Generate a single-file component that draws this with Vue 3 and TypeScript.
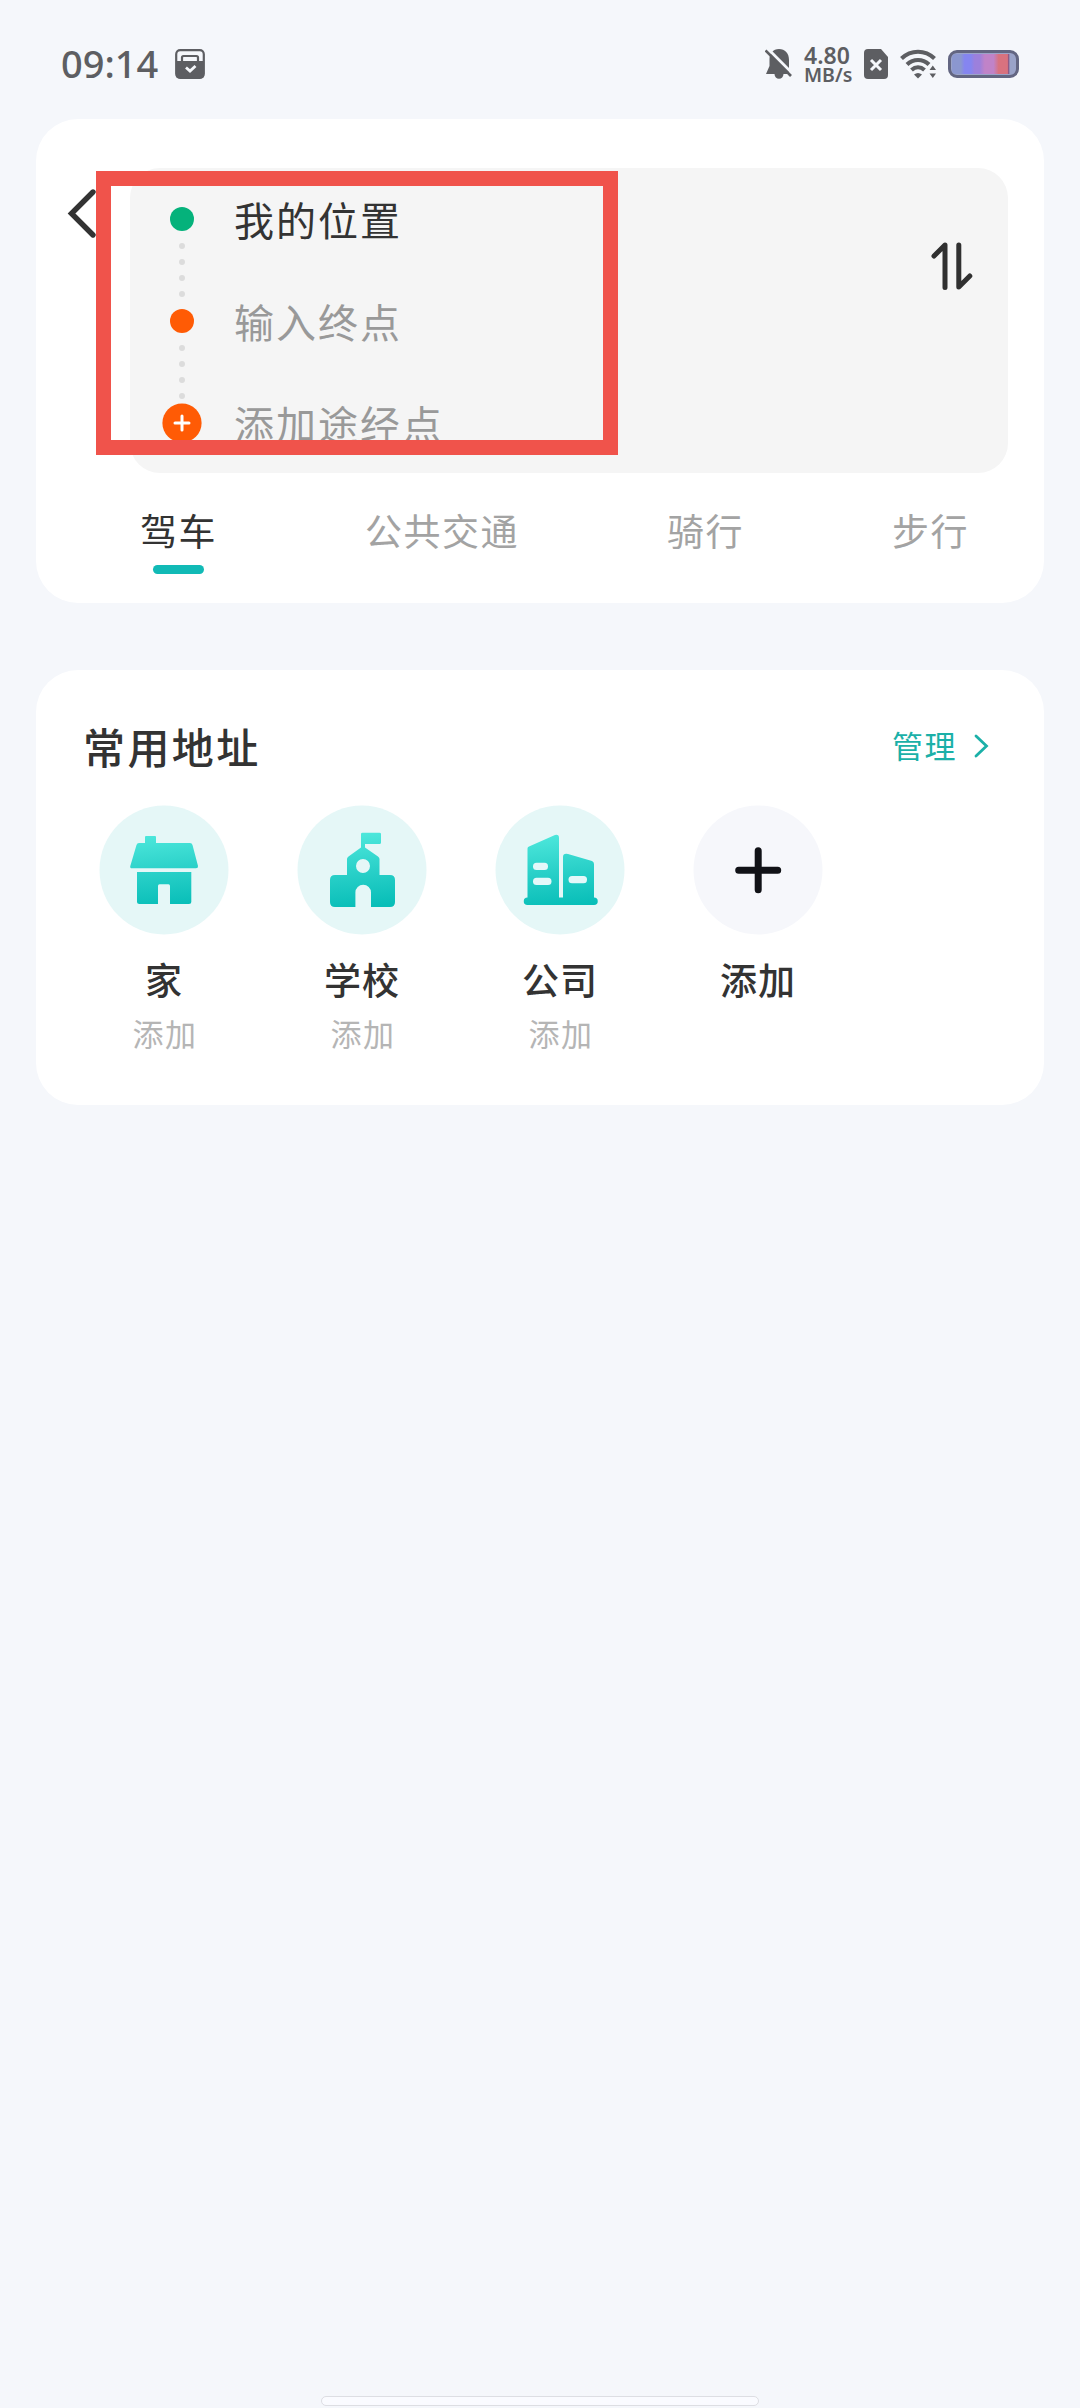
<script setup lang="ts">
import { ref } from 'vue'

type IconName = 'home' | 'school' | 'company' | 'plus'

interface Place {
  icon: IconName
  name: string
  hint?: string
}

const tabs: string[] = ['驾车', '公共交通', '骑行', '步行']
const activeTab = ref(0)

const places: Place[] = [
  { icon: 'home', name: '家', hint: '添加' },
  { icon: 'school', name: '学校', hint: '添加' },
  { icon: 'company', name: '公司', hint: '添加' },
  { icon: 'plus', name: '添加' },
]
</script>

<template>
  <div class="screen">
    <header class="status">
      <span class="time">09:14</span>
      <svg class="inbox" width="30" height="30" viewBox="0 0 30 30">
        <rect x="1.2" y="1.2" width="27.6" height="27.6" rx="4" fill="none" stroke="#5d5e62" stroke-width="2.2" />
        <path d="M1 12H29V26a3.500 3.500 0 0 1-3.500 3.500H4.500A3.500 3.500 0 0 1 1 26Z" fill="#5d5e62" />
        <path d="M7 13V8.500A1.500 1.500 0 0 1 8.500 7H21.500A1.500 1.500 0 0 1 23 8.500V13" fill="none" stroke="#5d5e62" stroke-width="2.200" />
        <path d="M11 18.500L15 22L20.500 17" fill="none" stroke="#f5f7fb" stroke-width="2.800" />
      </svg>
      <span class="grow"></span>
      <svg class="bell" width="28" height="31" viewBox="0 0 28 31">
        <path d="M14 0C8 0 4.500 4.500 4.500 10V17L1 25H9.500A4.500 4.800 0 0 0 18.500 25H24V11C24 4 20 0 14 0Z" fill="#5d5e62" />
        <path d="M2 -1L29 26" stroke="#f5f7fb" stroke-width="3" />
        <path d="M0.500 1.500L26 27" stroke="#5d5e62" stroke-width="2.600" />
      </svg>
      <span class="speed"><b>4.80</b><i>MB/s</i></span>
      <svg class="sim" width="24" height="30" viewBox="0 0 24 30">
        <path d="M4 0H17L24 8V26a4 4 0 0 1-4 4H4a4 4 0 0 1-4-4V4a4 4 0 0 1 4-4Z" fill="#5d5e62" />
        <path d="M7 11L17 21M17 11L7 21" stroke="#f5f7fb" stroke-width="3" />
      </svg>
      <svg class="wifi" width="37" height="30" viewBox="0 0 37 30">
        <g fill="none" stroke="#5d5e62" stroke-width="4.200">
          <path d="M1.500 9.500C11 0.500 25 0.500 34.500 9.500" />
          <path d="M7 15.500C13.500 9.500 22.500 9.500 29 15.500" />
          <path d="M11.500 21C15.500 17.500 20.500 17.500 24.500 21" />
        </g>
        <path d="M14 25.500Q18 22.500 22 25.500L18 29.500ZM29.500 21L32.800 16.500L36 21ZM29.500 24.500H36L32.800 29Z" fill="#5d5e62" />
      </svg>
      <span class="battery"><span class="charge"></span></span>
    </header>

    <section class="card route">
      <div class="route-main">
        <svg class="back" width="94" height="90" viewBox="0 0 94 90">
          <path d="M57 24L35.500 45.500L57 67" fill="none" stroke="#333" stroke-width="5.400" stroke-linecap="round" />
        </svg>
        <div class="panel">
          <div class="rows">
            <div class="row">
              <span class="mark"><span class="dot green"></span></span>
              <span class="origin">我的位置</span>
              <span class="trail"><u v-for="n in 4" :key="n"></u></span>
            </div>
            <div class="row">
              <span class="mark"><span class="dot"></span></span>
              <span>输入终点</span>
              <span class="trail"><u v-for="n in 4" :key="n"></u></span>
            </div>
            <div class="row">
              <span class="mark">
                <svg width="40" height="40" viewBox="0 0 40 40">
                  <circle cx="20" cy="20" r="19.600" fill="#ff5b05" />
                  <path d="M13 20H27M20 13V27" stroke="#fff" stroke-width="3" stroke-linecap="round" />
                </svg>
              </span>
              <span>添加途经点</span>
            </div>
          </div>
          <svg class="swap" width="42" height="50" viewBox="0 0 42 50">
            <path d="M14 46.500V4L3 15" fill="none" stroke="#303030" stroke-width="5" stroke-linecap="round" stroke-linejoin="round" />
            <path d="M27.800 4V46L38.800 35" fill="none" stroke="#303030" stroke-width="5" stroke-linecap="round" stroke-linejoin="round" />
          </svg>
        </div>
      </div>
      <nav class="tabs">
        <span
          v-for="(tab, i) in tabs"
          :key="tab"
          class="tab"
          :class="{ active: i === activeTab }"
          @click="activeTab = i"
        >{{ tab }}</span>
      </nav>
      <div class="highlight"></div>
    </section>

    <section class="card places">
      <div class="head">
        <h2>常用地址</h2>
        <span class="manage">管理</span>
        <svg width="15" height="24" viewBox="0 0 15 24">
          <path d="M2 2L12.500 12L2 22" fill="none" stroke="#1bb0a8" stroke-width="2.800" stroke-linecap="round" />
        </svg>
      </div>
      <div class="grid">
        <div v-for="place in places" :key="place.icon" class="place">
          <svg class="bubble" width="130" height="130" viewBox="0 0 130 130">
            <defs>
              <linearGradient id="teal" gradientUnits="userSpaceOnUse" x1="58" y1="28" x2="66" y2="102">
                <stop offset="0" stop-color="#4ee8dc" />
                <stop offset="0.500" stop-color="#2bd1c9" />
                <stop offset="1" stop-color="#08beb8" />
              </linearGradient>
            </defs>
            <circle cx="65" cy="65" r="64.500" :fill="place.icon === 'plus' ? '#f6f7fb' : '#e5f7f7'" />
            <g v-if="place.icon === 'home'" fill="url(#teal)">
              <path d="M46 38V32Q46 31 47 31H56Q57 31 57 32V38H91Q93 38 93.500 40L99 61Q99.300 63.300 97 63.300H33Q30.700 63.300 31.300 61L37.500 40Q38 38 40 38Z" />
              <path d="M38 67H92.300V97Q92.300 99 90 99H71V81Q71 79.300 69.500 79.300H60.500Q59 79.300 59 81V99H40.500Q38 99 38 96.500Z" />
            </g>
            <g v-else-if="place.icon === 'school'">
              <path fill="url(#teal)" fill-rule="evenodd" d="M64 29Q64 27.700 65.500 27.700H82.500Q84 27.700 84 29V37.500Q84 39 82.500 39H68V42.500L81 51.500Q82.500 52.500 82.500 54V70H93Q98 70 98 75V97Q98 102 93 102H74V87.500A7.800 7.800 0 0 0 58.400 87.500V102H38Q33 102 33 97V75Q33 70 38 70H50V54Q50 52.500 51.500 51.500L64 42.500ZM73 61A7 7 0 1 0 59 61A7 7 0 1 0 73 61Z" />
            </g>
            <g v-else-if="place.icon === 'company'">
              <path fill="url(#teal)" d="M32.500 43.500Q32.500 42.300 34 41.600L60 30Q64 29 64 33V92.500H68V52Q68 48 73 49L97 56Q99 57 99 59V92.500A3.700 3.700 0 0 1 99 100H32.500A3.700 3.700 0 0 1 32.500 92.500Z" />
              <g fill="#e4f8f9">
                <rect x="38" y="57.700" width="15" height="7.300" rx="3.500" />
                <rect x="38" y="72.700" width="18.500" height="7.300" rx="3.500" />
                <rect x="73.500" y="71" width="18.500" height="7.300" rx="3.500" />
              </g>
            </g>
            <path v-else d="M45.700 65.300H84.700M65.200 45.800V84.800" stroke="#111217" stroke-width="7" stroke-linecap="round" />
          </svg>
          <span class="name">{{ place.name }}</span>
          <span v-if="place.hint" class="hint">{{ place.hint }}</span>
        </div>
      </div>
    </section>

    <footer><span class="home-bar"></span></footer>
  </div>
</template>

<style>
body {
  background: #f5f7fb;
}
</style>

<style scoped>
.screen {
  box-sizing: border-box;
  width: 1080px;
  height: 2408px;
  display: flex;
  flex-direction: column;
  overflow: hidden;
  background: #f5f7fb;
  color: #333;
  font-family: "Noto Sans CJK SC", "Noto Sans", sans-serif;
}
.status {
  box-sizing: border-box;
  height: 119px;
  padding: 49px 61px 0 61px;
  display: flex;
  align-items: flex-start;
  color: #5d5e62;
  font-family: "Noto Sans", sans-serif;
}
.time {
  width: 114px;
  margin-top: -5px;
  font-size: 38px;
  line-height: 38px;
  font-weight: 500;
}
.grow {
  flex: 1;
}
.bell {
  margin-right: 11px;
}
.speed {
  width: 60px;
  margin-top: -5px;
  display: flex;
  flex-direction: column;
}
.speed b {
  font-size: 23px;
  line-height: 22px;
  font-weight: 600;
}
.speed i {
  font-size: 19.5px;
  line-height: 17px;
  font-style: normal;
  font-weight: 600;
}
.sim {
  margin-right: 12px;
}
.wifi {
  margin-right: 11px;
}
.battery {
  box-sizing: border-box;
  width: 71px;
  height: 28px;
  margin-top: 1px;
  padding: 1px;
  border: 3px solid #636682;
  border-radius: 9px;
  background: #9aa3c8;
}
.charge {
  display: block;
  height: 20px;
  border-radius: 4px;
  background: linear-gradient(90deg, #8b97cf 0 14%, #8585f0 20% 30%, #9c80dc 36% 44%, #c083c8 52% 66%, #d8727f 74% 88%, #8d5a86 89% 90%, #9aa3c8 92%);
}
.card {
  box-sizing: border-box;
  width: 1008px;
  margin-left: 36px;
  border-radius: 42px;
  background: #fff;
}
.route {
  position: relative;
  height: 484px;
  padding-top: 49px;
}
.route-main {
  display: flex;
}
.panel {
  width: 878px;
  height: 305px;
  display: flex;
  justify-content: space-between;
  border-radius: 30px;
  background: #f5f5f5;
}
.row {
  position: relative;
  height: 102px;
  display: flex;
  align-items: center;
  color: #999;
  font-size: 40px;
  line-height: 60px;
  letter-spacing: 2px;
}
.row .origin {
  color: #333;
}
.mark {
  width: 104px;
  display: flex;
  justify-content: center;
}
.dot {
  width: 24px;
  height: 24px;
  border-radius: 50%;
  background: #ff5b05;
}
.green {
  background: #05b27b;
}
.trail {
  position: absolute;
  top: 75px;
  left: 49px;
  display: flex;
  flex-direction: column;
  gap: 10px;
}
.trail u {
  width: 6px;
  height: 6px;
  border-radius: 50%;
  background: #dcdcdc;
}
.swap {
  margin: 73px 35px 0 0;
}
.highlight {
  position: absolute;
  top: 52px;
  left: 60px;
  box-sizing: border-box;
  width: 522px;
  height: 284px;
  border: 15px solid #f0534b;
}
.tabs {
  display: flex;
  gap: 148px;
  padding: 28px 0 0 104px;
}
.tab {
  height: 76px;
  color: #a3a3a3;
  font-size: 37px;
  line-height: 58px;
  letter-spacing: 1.5px;
}
.tab.active {
  color: #333;
}
.tab.active::after {
  content: "";
  display: block;
  width: 51px;
  height: 9px;
  margin: 6px auto 0;
  border-radius: 5px;
  background: #11bab6;
}
.places {
  height: 435px;
  margin-top: 67px;
  padding: 43px 55px 0 47px;
}
.head {
  height: 66px;
  display: flex;
  align-items: center;
}
h2 {
  flex: 1;
  margin: 0;
  font-size: 42px;
  line-height: 62px;
  font-weight: 500;
  letter-spacing: 2.4px;
}
.manage {
  margin: 0 17px 2px 0;
  color: #1bb0a8;
  font-size: 31px;
  line-height: 44px;
  letter-spacing: 1.5px;
}
.grid {
  display: flex;
  gap: 68px;
  padding: 26px 0 0 16px;
}
.place {
  width: 130px;
  display: flex;
  flex-direction: column;
  align-items: center;
}
.bubble {
  display: block;
}
.name {
  margin-top: 17px;
  font-size: 37px;
  line-height: 54px;
  font-weight: 500;
  letter-spacing: 1px;
  white-space: nowrap;
}
.hint {
  margin-top: 5px;
  padding-left: 2px;
  color: #b5b5b5;
  font-size: 31px;
  line-height: 44px;
  letter-spacing: 1.5px;
}
footer {
  margin-top: auto;
  padding-bottom: 2px;
  display: flex;
  justify-content: center;
}
.home-bar {
  box-sizing: border-box;
  width: 438px;
  height: 10px;
  border: 1.5px solid #dddee3;
  border-radius: 5px;
  background: #fafbff;
}
</style>
